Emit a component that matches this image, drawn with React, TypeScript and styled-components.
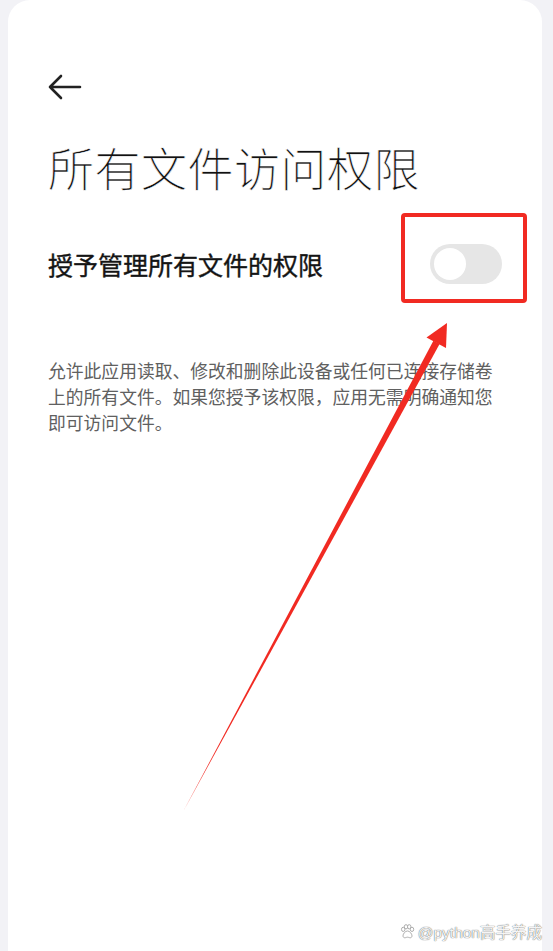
import styled, { createGlobalStyle } from "styled-components";

const GlobalStyle = createGlobalStyle`
  html, body {
    margin: 0;
    padding: 0;
    background: #f2f2f6;
  }
  body {
    font-family: "Noto Sans CJK SC", "Noto Sans", sans-serif;
  }
`;

const Page = styled.div`
  position: relative;
  min-height: 951px;
  padding: 0 11px 0 8px;
  overflow: hidden;
`;

const Card = styled.main`
  background: #ffffff;
  border-radius: 22px 22px 0 0;
  min-height: 951px;
  padding: 74px 40px 0;
  box-sizing: border-box;
`;

const BackButton = styled.button`
  display: block;
  padding: 0;
  margin: 0;
  border: none;
  background: none;
  width: 34px;
  height: 26px;
  cursor: pointer;
`;

const Title = styled.h1`
  margin: 38px 0 0;
  font-size: 46px;
  line-height: 56px;
  font-weight: 300;
  color: #111;
  letter-spacing: 0.5px;
  -webkit-font-smoothing: antialiased;
  -webkit-text-stroke: 0.55px #ffffff;
`;

const SettingRow = styled.div`
  display: flex;
  align-items: center;
  justify-content: space-between;
  margin-top: 50px;
  height: 40px;
`;

const SettingLabel = styled.span`
  font-size: 25px;
  font-weight: 400;
  color: #141414;
  -webkit-text-stroke: 0.4px #141414;
`;

const ToggleWrap = styled.div`
  position: relative;
`;

const Track = styled.div<{ $on: boolean }>`
  width: 72px;
  height: 40px;
  border-radius: 20px;
  background: ${(p) => (p.$on ? "#3482ff" : "#e6e6e6")};
  display: flex;
  align-items: center;
  padding: 0 4px;
  box-sizing: border-box;
  justify-content: ${(p) => (p.$on ? "flex-end" : "flex-start")};
`;

const Knob = styled.div`
  width: 32px;
  height: 32px;
  border-radius: 50%;
  background: #ffffff;
`;

const Highlight = styled.div`
  position: absolute;
  left: -29px;
  right: -25px;
  top: -31px;
  bottom: -19px;
  border: 4px solid #f12a22;
  border-radius: 4px;
  pointer-events: none;
`;

const Description = styled.p`
  margin: 73px 0 0;
  font-size: 17.8px;
  line-height: 26px;
  color: #606060;
`;

const Overlay = styled.svg`
  position: absolute;
  left: 0;
  top: 0;
  width: 553px;
  height: 951px;
  pointer-events: none;
`;

const Watermark = styled.div`
  position: absolute;
  right: 11px;
  bottom: 9px;
  display: flex;
  align-items: center;
  gap: 3px;
  font-family: "Liberation Sans", "Noto Sans CJK SC", sans-serif;
  font-size: 15.5px;
  color: rgba(255, 255, 255, 0.95);
  text-shadow: 0 0 1px rgba(0, 0, 0, 0.55), 0 0 1px rgba(0, 0, 0, 0.4);
`;

const Paw = () => (
  <svg width="15" height="15" viewBox="0 0 14 14" fill="#fff" stroke="#aaa" strokeWidth="0.9">
    <ellipse cx="3" cy="5" rx="1.6" ry="2" />
    <ellipse cx="5.6" cy="2.6" rx="1.6" ry="2" />
    <ellipse cx="8.6" cy="2.6" rx="1.6" ry="2" />
    <ellipse cx="11.2" cy="5" rx="1.6" ry="2" />
    <path d="M7 6.5c-2 0-4.2 2.6-4.2 4.6 0 1.4 1.2 2 2.2 1.7.8-.2 1.4-.5 2-.5s1.2.3 2 .5c1 .3 2.2-.3 2.2-1.7 0-2-2.2-4.6-4.2-4.6z" />
  </svg>
);

const Toggle = ({ on }: { on: boolean }) => (
  <ToggleWrap>
    <Track $on={on}>
      <Knob />
    </Track>
    <Highlight />
  </ToggleWrap>
);

export default function App() {
  return (
    <>
      <GlobalStyle />
      <Page>
        <Card>
          <BackButton aria-label="返回">
            <svg width="34" height="26" viewBox="0 0 34 26" fill="none" stroke="#222" strokeWidth="2.6" strokeLinecap="round" strokeLinejoin="round">
              <path d="M2 13h30M13 2L2 13l11 11" />
            </svg>
          </BackButton>
          <Title>所有文件访问权限</Title>
          <SettingRow>
            <SettingLabel>授予管理所有文件的权限</SettingLabel>
            <Toggle on={false} />
          </SettingRow>
          <Description>
            允许此应用读取、修改和删除此设备或任何已连接存储卷上的所有文件。如果您授予该权限，应用无需明确通知您即可访问文件。
          </Description>
        </Card>
        {/* annotation arrow */}
        <Overlay viewBox="0 0 553 951">
          <polygon points="184,810 439.6,344.1 433.4,340.7" fill="#f12a22" />
          <polygon points="447,323 446,348 426.5,337.5" fill="#f12a22" />
        </Overlay>
        <Watermark>
          <Paw />
          <span>@python高手养成</span>
        </Watermark>
      </Page>
    </>
  );
}
